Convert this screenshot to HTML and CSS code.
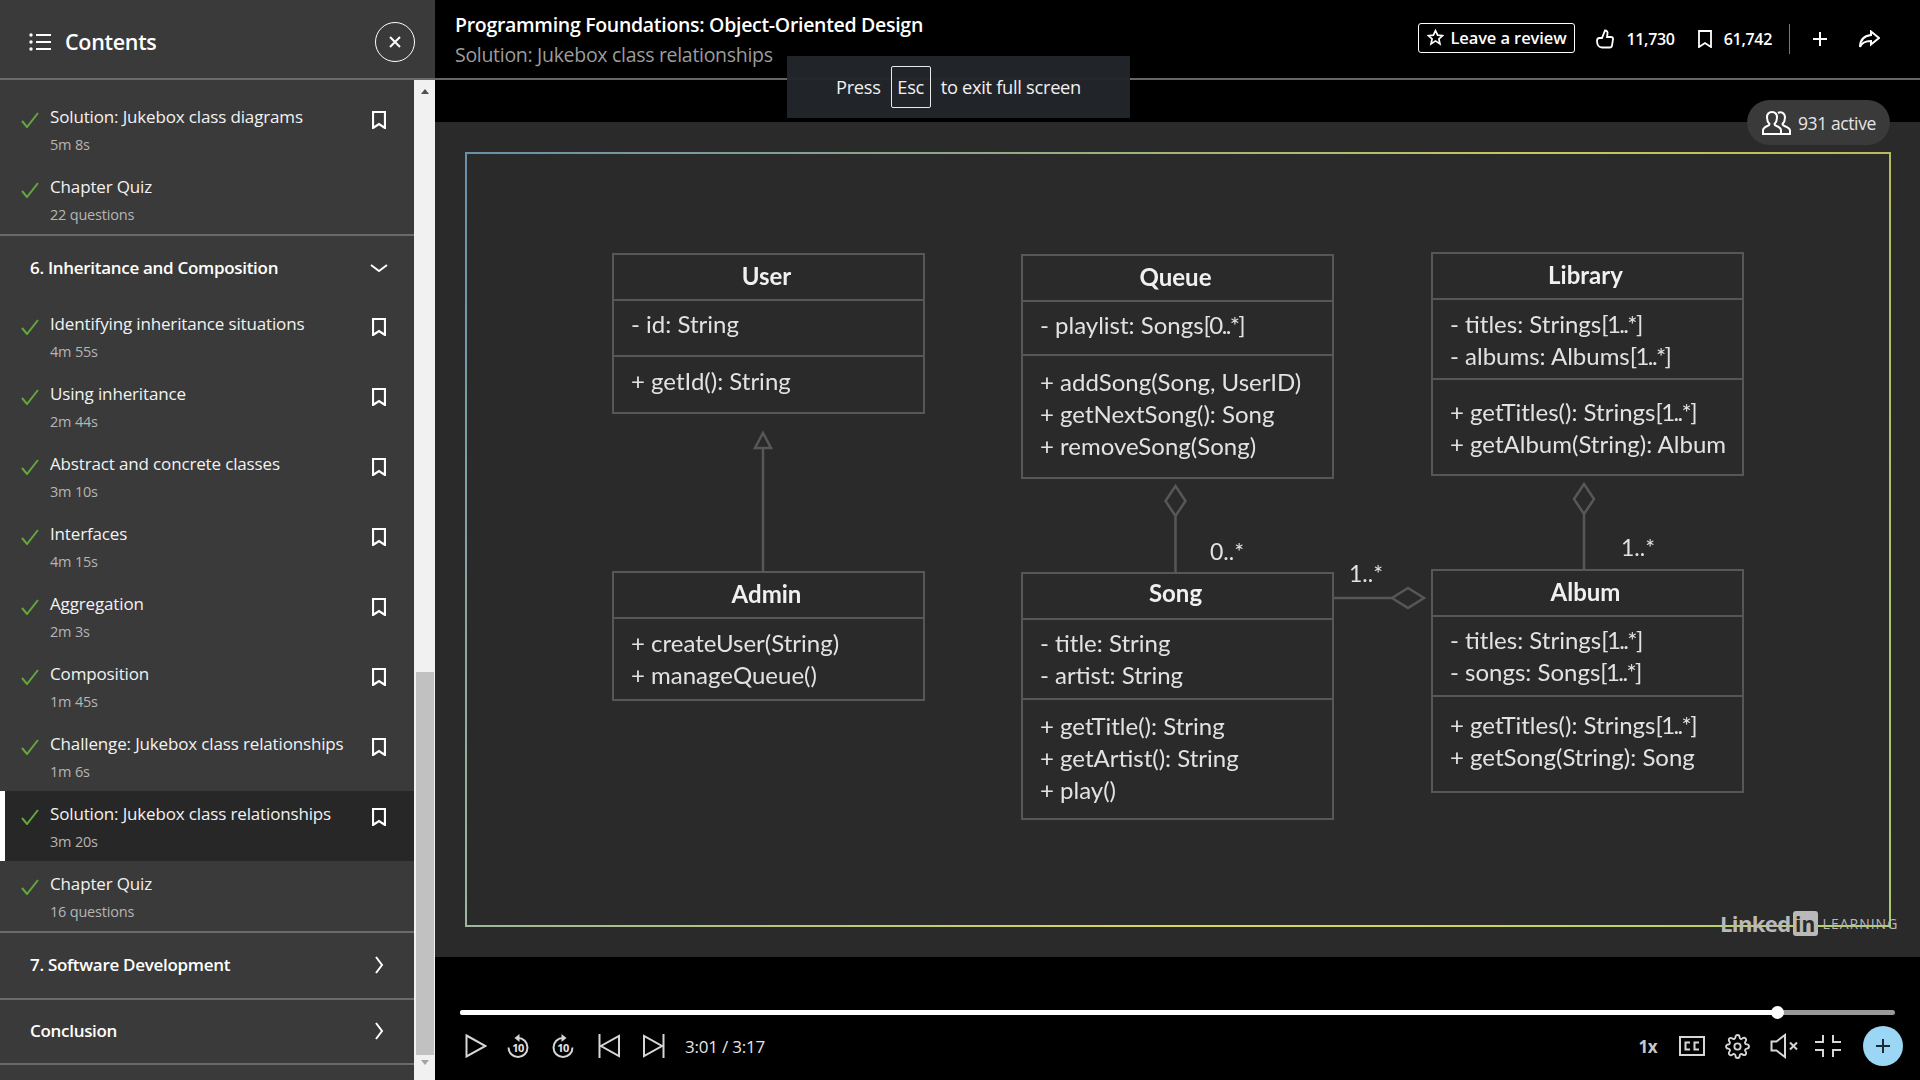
FILE: index.html
```html
<!DOCTYPE html>
<html lang="en">
<head>
    <meta charset="UTF-8">
    <title>Programming Foundations: Object-Oriented Design</title>
    <link rel="stylesheet" href="styles.css">
</head>
<body>
    <aside class="sidebar">
        <div class="side-head">
            <svg class="list-icon" width="24" height="20" viewBox="0 0 24 20"><circle cx="3" cy="3" r="1.7"/><circle cx="3" cy="10" r="1.7"/><circle cx="3" cy="17" r="1.7"/><path d="M8 3h15M8 10h15M8 17h15"/></svg>
            <h2>Contents</h2>
            <button class="close-btn"><svg width="14" height="14" viewBox="0 0 14 14"><path d="M2 2l10 10M12 2L2 12"/></svg></button>
        </div>
        <div class="side-body">
            <div class="toc">
                <div class="row">
                    <svg class="check" width="18" height="16" viewBox="0 0 18 16"><path d="M1 9l5 6L17 1"/></svg>
                    <div class="row-text"><div class="row-title">Solution: Jukebox class diagrams</div><div class="row-sub">5m 8s</div></div>
                    <svg class="mark" width="14" height="18" viewBox="0 0 14 18"><path d="M1 1h12v16l-6-4-6 4z"/></svg>
                </div>
                <div class="row">
                    <svg class="check" width="18" height="16" viewBox="0 0 18 16"><path d="M1 9l5 6L17 1"/></svg>
                    <div class="row-text"><div class="row-title">Chapter Quiz</div><div class="row-sub">22 questions</div></div>
                </div>
                <div class="section">
                    <span>6. Inheritance and Composition</span>
                    <svg class="chev" width="18" height="10" viewBox="0 0 18 10"><path d="M1 2l8 6 8-6"/></svg>
                </div>
                <div class="row">
                    <svg class="check" width="18" height="16" viewBox="0 0 18 16"><path d="M1 9l5 6L17 1"/></svg>
                    <div class="row-text"><div class="row-title">Identifying inheritance situations</div><div class="row-sub">4m 55s</div></div>
                    <svg class="mark" width="14" height="18" viewBox="0 0 14 18"><path d="M1 1h12v16l-6-4-6 4z"/></svg>
                </div>
                <div class="row">
                    <svg class="check" width="18" height="16" viewBox="0 0 18 16"><path d="M1 9l5 6L17 1"/></svg>
                    <div class="row-text"><div class="row-title">Using inheritance</div><div class="row-sub">2m 44s</div></div>
                    <svg class="mark" width="14" height="18" viewBox="0 0 14 18"><path d="M1 1h12v16l-6-4-6 4z"/></svg>
                </div>
                <div class="row">
                    <svg class="check" width="18" height="16" viewBox="0 0 18 16"><path d="M1 9l5 6L17 1"/></svg>
                    <div class="row-text"><div class="row-title">Abstract and concrete classes</div><div class="row-sub">3m 10s</div></div>
                    <svg class="mark" width="14" height="18" viewBox="0 0 14 18"><path d="M1 1h12v16l-6-4-6 4z"/></svg>
                </div>
                <div class="row">
                    <svg class="check" width="18" height="16" viewBox="0 0 18 16"><path d="M1 9l5 6L17 1"/></svg>
                    <div class="row-text"><div class="row-title">Interfaces</div><div class="row-sub">4m 15s</div></div>
                    <svg class="mark" width="14" height="18" viewBox="0 0 14 18"><path d="M1 1h12v16l-6-4-6 4z"/></svg>
                </div>
                <div class="row">
                    <svg class="check" width="18" height="16" viewBox="0 0 18 16"><path d="M1 9l5 6L17 1"/></svg>
                    <div class="row-text"><div class="row-title">Aggregation</div><div class="row-sub">2m 3s</div></div>
                    <svg class="mark" width="14" height="18" viewBox="0 0 14 18"><path d="M1 1h12v16l-6-4-6 4z"/></svg>
                </div>
                <div class="row">
                    <svg class="check" width="18" height="16" viewBox="0 0 18 16"><path d="M1 9l5 6L17 1"/></svg>
                    <div class="row-text"><div class="row-title">Composition</div><div class="row-sub">1m 45s</div></div>
                    <svg class="mark" width="14" height="18" viewBox="0 0 14 18"><path d="M1 1h12v16l-6-4-6 4z"/></svg>
                </div>
                <div class="row">
                    <svg class="check" width="18" height="16" viewBox="0 0 18 16"><path d="M1 9l5 6L17 1"/></svg>
                    <div class="row-text"><div class="row-title">Challenge: Jukebox class relationships</div><div class="row-sub">1m 6s</div></div>
                    <svg class="mark" width="14" height="18" viewBox="0 0 14 18"><path d="M1 1h12v16l-6-4-6 4z"/></svg>
                </div>
                <div class="row row-active">
                    <svg class="check" width="18" height="16" viewBox="0 0 18 16"><path d="M1 9l5 6L17 1"/></svg>
                    <div class="row-text"><div class="row-title">Solution: Jukebox class relationships</div><div class="row-sub">3m 20s</div></div>
                    <svg class="mark" width="14" height="18" viewBox="0 0 14 18"><path d="M1 1h12v16l-6-4-6 4z"/></svg>
                </div>
                <div class="row">
                    <svg class="check" width="18" height="16" viewBox="0 0 18 16"><path d="M1 9l5 6L17 1"/></svg>
                    <div class="row-text"><div class="row-title">Chapter Quiz</div><div class="row-sub">16 questions</div></div>
                </div>
                <div class="section">
                    <span>7. Software Development</span>
                    <svg class="chev chev-right" width="10" height="18" viewBox="0 0 10 18"><path d="M2 1l6 8-6 8"/></svg>
                </div>
                <div class="section">
                    <span>Conclusion</span>
                    <svg class="chev chev-right" width="10" height="18" viewBox="0 0 10 18"><path d="M2 1l6 8-6 8"/></svg>
                </div>
            </div>
            <div class="scrollbar">
                <div class="arrow-up"></div>
                <div class="thumb"></div>
                <div class="arrow-down"></div>
            </div>
        </div>
    </aside>

    <main class="player">
        <header class="top">
            <div class="titles">
                <div class="course">Programming Foundations: Object-Oriented Design</div>
                <div class="lesson">Solution: Jukebox class relationships</div>
            </div>
            <div class="actions">
                <button class="review">
                    <svg width="17" height="17" viewBox="0 0 16 16"><path d="M8 1.500l2 4.300 4.600.5-3.400 3.100 1 4.600L8 11.200l-4.200 2.800 1-4.600L1.400 6.300 6 5.800z"/></svg>
                    Leave a review
                </button>
                <span class="stat stat-likes">
                    <svg width="18" height="20" viewBox="0 0 18 20"><path d="M1 12c0-2 1-3 2.500-3H6l3-7.500c1.800 0 2.800 1.200 2.500 3L11 8h4c1.500 0 2.200 1 2 2.200l-1 6.300c-.2 1.200-1 2-2.200 2H6c-3 0-5-2.500-5-6.500z"/></svg>
                    11,730
                </span>
                <span class="stat stat-saves">
                    <svg width="14" height="18" viewBox="0 0 14 18"><path d="M1 1h12v16l-6-4-6 4z"/></svg>
                    61,742
                </span>
                <span class="divider"></span>
                <svg class="act-plus" width="20" height="20" viewBox="0 0 20 20"><path d="M10 3v14M3 10h14"/></svg>
                <svg class="act-share" width="22" height="18" viewBox="0 0 22 18"><path d="M13 1.500l8 6.500-8 6.500V11c-5 0-9 1-11 6 0-6 3-11 11-12z"/></svg>
            </div>
        </header>

        <div class="active-row">
            <div class="active-pill">
                <svg width="30" height="24" viewBox="0 0 30 24"><path d="M1 23v-3.500c0-2.500 2-3.500 4.500-4.500 1.500-.5 2-1 2-2-1.500-1.500-2.500-3.500-2.500-6.500C5 3 7 1 10 1s5 2 5 5.500c0 3-1 5-2.500 6.500 0 1 .5 1.500 2 2 2.500 1 4.500 2 4.500 4.500V23z"/><path d="M16 2c3-1.500 7-.5 7 4.500 0 3-1 5-2.500 6.500 0 1 .5 1.500 2 2 2.500 1 5.500 2 5.500 4.500V23h-8"/></svg>
                <span>931 active</span>
            </div>
        </div>

        <section class="video">
            <div class="slide">
                <svg class="links" width="1426" height="775" viewBox="0 0 1426 775">
                    <path d="M298 419V295M290 295l8-15 8 15z"/>
                    <path d="M710.500 420V363M710.500 333l10 15-10 15-10-15z"/>
                    <path d="M1119 417V361M1119 331l10 15-10 15-10-15z"/>
                    <path d="M869 445h58M927 445l16-10 16 10-16 10z"/>
                </svg>

                <div class="uml uml-user">
                    <div class="uml-name">User</div>
                    <div class="uml-part part-56">- id: String</div>
                    <div class="uml-part pad-8">+ getId(): String</div>
                </div>
                <div class="uml uml-queue">
                    <div class="uml-name">Queue</div>
                    <div class="uml-part part-54">- playlist: Songs<span class="range">[0..*]</span></div>
                    <div class="uml-part pad-10">+ addSong(Song, UserID)<br>+ getNextSong(): Song<br>+ removeSong(Song)</div>
                </div>
                <div class="uml uml-library">
                    <div class="uml-name">Library</div>
                    <div class="uml-part part-80 pad-8">- titles: Strings<span class="range">[1..*]</span><br>- albums: Albums<span class="range">[1..*]</span></div>
                    <div class="uml-part pad-16">+ getTitles(): Strings<span class="range">[1..*]</span><br>+ getAlbum(String): Album</div>
                </div>
                <div class="uml uml-admin">
                    <div class="uml-name">Admin</div>
                    <div class="uml-part pad-8">+ createUser(String)<br>+ manageQueue()</div>
                </div>
                <div class="uml uml-song">
                    <div class="uml-name uml-name-high">Song</div>
                    <div class="uml-part part-80">- title: String<br>- artist: String</div>
                    <div class="uml-part pad-10">+ getTitle(): String<br>+ getArtist(): String<br>+ play()</div>
                </div>
                <div class="uml uml-album">
                    <div class="uml-name">Album</div>
                    <div class="uml-part part-80">- titles: Strings<span class="range">[1..*]</span><br>- songs: Songs<span class="range">[1..*]</span></div>
                    <div class="uml-part pad-12">+ getTitles(): Strings<span class="range">[1..*]</span><br>+ getSong(String): Song</div>
                </div>

                <span class="mult mult-song">0..*</span>
                <span class="mult mult-link">1..*</span>
                <span class="mult mult-album">1..*</span>
            </div>
            <div class="watermark">
                <span class="wm-linked">Linked</span><span class="wm-in">in</span><span class="wm-learning">LEARNING</span>
            </div>
        </section>

        <footer class="controls">
            <div class="progress"><div class="progress-done"></div><div class="progress-knob"></div></div>
            <div class="control-row">
                <div class="control-group">
                    <svg class="ctl" width="22" height="24" viewBox="0 0 22 24"><path d="M1.500 1.500L20.500 12 1.500 22.500z"/></svg>
                    <svg class="ctl ctl-back" width="24" height="26" viewBox="0 0 24 26"><path d="M12 5a9.500 9.500 0 1 1-9.500 9.500"/><path class="solid" d="M13.500 1L8.500 5l5 4z"/><text x="12" y="18.500" text-anchor="middle">10</text></svg>
                    <svg class="ctl" width="24" height="26" viewBox="0 0 24 26"><path d="M12 5a9.500 9.500 0 1 0 9.500 9.500"/><path class="solid" d="M10.500 1l5 4-5 4z"/><text x="12" y="18.500" text-anchor="middle">10</text></svg>
                    <svg class="ctl ctl-prev" width="22" height="26" viewBox="0 0 22 26"><path d="M1.500 1v24M21 3v20L3 13z"/></svg>
                    <svg class="ctl ctl-next" width="22" height="26" viewBox="0 0 22 26"><path d="M20.500 1v24M1 3v20l18-10z"/></svg>
                    <span class="time">3:01 / 3:17</span>
                </div>
                <div class="control-group">
                    <span class="speed">1x</span>
                    <svg class="ctl ctl-cc" width="26" height="20" viewBox="0 0 26 20"><path d="M1 1h24v18H1z"/><path d="M11 6.500H6.500v7H11M20 6.500h-4.500v7H20"/></svg>
                    <svg class="ctl ctl-gear" width="25" height="25" viewBox="0 0 24 24"><circle cx="12" cy="12" r="3"/><path d="M19.400 15a1.650 1.650 0 0 0 .33 1.820l.06.06a2 2 0 0 1 0 2.830 2 2 0 0 1-2.830 0l-.06-.06a1.650 1.650 0 0 0-1.820-.33 1.650 1.650 0 0 0-1 1.510V21a2 2 0 0 1-2 2 2 2 0 0 1-2-2v-.09A1.650 1.650 0 0 0 9 19.400a1.650 1.650 0 0 0-1.820.33l-.06.06a2 2 0 0 1-2.830 0 2 2 0 0 1 0-2.830l.06-.06a1.650 1.650 0 0 0 .33-1.820 1.650 1.650 0 0 0-1.510-1H3a2 2 0 0 1-2-2 2 2 0 0 1 2-2h.09A1.650 1.650 0 0 0 4.600 9a1.650 1.650 0 0 0-.33-1.820l-.06-.06a2 2 0 0 1 0-2.830 2 2 0 0 1 2.830 0l.06.06a1.650 1.650 0 0 0 1.820.33H9a1.650 1.650 0 0 0 1-1.510V3a2 2 0 0 1 2-2 2 2 0 0 1 2 2v.09a1.650 1.650 0 0 0 1 1.510 1.650 1.650 0 0 0 1.820-.33l.06-.06a2 2 0 0 1 2.830 0 2 2 0 0 1 0 2.830l-.06.06a1.650 1.650 0 0 0-.33 1.820V9a1.650 1.650 0 0 0 1.510 1H21a2 2 0 0 1 2 2 2 2 0 0 1-2 2h-.09a1.650 1.650 0 0 0-1.510 1z"/></svg>
                    <svg class="ctl ctl-mute" width="28" height="26" viewBox="0 0 28 26"><path d="M1.500 8.500v9h5L15 24V2L6.500 8.500zM20 9.500l7 7M27 9.500l-7 7"/></svg>
                    <svg class="ctl ctl-exit" width="28" height="24" viewBox="0 0 28 24"><path d="M9 1v7H1M19 1v7h8M9 23v-7H1M19 23v-7h8"/></svg>
                    <button class="fab"><svg width="18" height="18" viewBox="0 0 18 18"><path d="M9 2v14M2 9h14"/></svg></button>
                </div>
            </div>
        </footer>

        <div class="esc-toast">
            <span>Press</span><kbd>Esc</kbd><span>to exit full screen</span>
        </div>
    </main>
</body>
</html>
```
FILE: styles.css
```css
* {
    box-sizing: border-box;
}
html, body {
    margin: 0;
    height: 100%;
}
body {
    display: flex;
    width: 1920px;
    height: 1080px;
    overflow: hidden;
    background: #000;
    color: #fff;
    font-family: "Open Sans", "Noto Sans", sans-serif;
}
button {
    font-family: inherit;
    color: inherit;
    background: none;
    cursor: pointer;
}
svg {
    display: block;
    flex: none;
    fill: none;
    stroke: #fff;
}

/* sidebar */
.sidebar {
    width: 435px;
    flex: none;
    display: flex;
    flex-direction: column;
    background: #3a3a3a;
}
.side-head {
    height: 80px;
    flex: none;
    display: flex;
    align-items: center;
    padding: 5px 20px 0 28px;
    border-bottom: 2px solid #6a6a6a;
}
.list-icon {
    stroke-width: 2;
}
.list-icon circle {
    fill: #fff;
    stroke: none;
}
.side-head h2 {
    margin: 0 0 0 13px;
    font-size: 21.5px;
    font-weight: 600;
    letter-spacing: -0.3px;
}
.close-btn {
    margin-left: auto;
    width: 40px;
    height: 40px;
    border: 1.5px solid #fff;
    border-radius: 50%;
    display: flex;
    align-items: center;
    justify-content: center;
    padding: 0;
}
.close-btn svg {
    stroke-width: 2;
}
.side-body {
    flex: 1;
    display: flex;
    min-height: 0;
}
.toc {
    flex: 1;
    padding-top: 14px;
}
.row {
    height: 70px;
    display: flex;
    padding: 11px 28px 0 21px;
}
.row-active {
    background: #272727;
    box-shadow: inset 5px 0 0 #fff;
}
.check {
    stroke: #62a83e;
    stroke-width: 2;
    margin-top: 7px;
}
.row-text {
    margin-left: 11px;
    flex: 1;
}
.row-title {
    font-size: 17px;
    line-height: 24px;
    letter-spacing: -0.15px;
    color: #f2f2f2;
}
.row-sub {
    margin-top: 7px;
    font-size: 14.5px;
    line-height: 18px;
    letter-spacing: -0.2px;
    color: #b5b5b5;
}
.mark {
    stroke-width: 2.200;
    margin-top: 5.500px;
}
.section {
    height: 67px;
    display: flex;
    align-items: center;
    justify-content: space-between;
    padding: 0 26px 2px 30px;
    border-top: 2px solid #6a6a6a;
    font-size: 17px;
    font-weight: 600;
    letter-spacing: -0.3px;
}
.section:last-child {
    border-bottom: 2px solid #6a6a6a;
}
.chev {
    stroke-width: 2;
}
.chev-right {
    margin-right: 4px;
}
.scrollbar {
    width: 21px;
    flex: none;
    display: flex;
    flex-direction: column;
    align-items: center;
    background: #f1f1f1;
}
.arrow-up {
    margin-top: 9px;
    border: 4.5px solid transparent;
    border-top: 0;
    border-bottom: 5px solid #505050;
}
.thumb {
    margin-top: 578px;
    width: 18px;
    height: 383px;
    background: #c1c1c1;
}
.arrow-down {
    margin-top: 5px;
    border: 4.5px solid transparent;
    border-bottom: 0;
    border-top: 5px solid #a3a3a3;
}

/* player */
.player {
    flex: 1;
    display: flex;
    flex-direction: column;
    position: relative;
    min-width: 0;
}
.top {
    height: 80px;
    flex: none;
    display: flex;
    justify-content: space-between;
    padding: 0 40px 0 20px;
    border-bottom: 2px solid #666;
}
.titles {
    padding-top: 11px;
}
.course {
    font-size: 19.5px;
    line-height: 28px;
    font-weight: 600;
    letter-spacing: -0.3px;
}
.lesson {
    margin-top: 2px;
    font-size: 19.5px;
    line-height: 28px;
    letter-spacing: -0.3px;
    color: #9c9c9c;
}
.actions {
    display: flex;
    align-items: center;
    height: 78px;
}
.review {
    display: flex;
    align-items: center;
    gap: 6px;
    width: 157px;
    height: 30px;
    margin-top: -2px;
    padding: 0 0 1px 8px;
    border: 1.5px solid #fff;
    border-radius: 3px;
    font-size: 16.5px;
    font-weight: 600;
    letter-spacing: -0.1px;
    white-space: nowrap;
}
.review svg {
    stroke-width: 1.600;
}
.stat {
    display: flex;
    align-items: center;
    gap: 12px;
    font-size: 16px;
    font-weight: 600;
    letter-spacing: -0.3px;
}
.stat svg {
    stroke-width: 1.800;
}
.stat-likes {
    margin-left: 21px;
}
.stat-saves {
    margin-left: 23px;
}
.divider {
    width: 1px;
    height: 30px;
    margin-left: 17px;
    background: #777;
}
.act-plus {
    margin-left: 20px;
    stroke-width: 2;
}
.act-share {
    margin-left: 28px;
    stroke-width: 2;
}
.active-row {
    height: 42px;
    flex: none;
    position: relative;
    z-index: 2;
}
.active-pill {
    position: absolute;
    top: 20px;
    right: 30px;
    width: 143px;
    height: 45px;
    display: flex;
    align-items: center;
    gap: 6px;
    padding-left: 15px;
    border-radius: 23px;
    background: #3a3a3a;
    font-size: 17.5px;
    letter-spacing: -0.4px;
    color: #e6e6e6;
}
.active-pill svg {
    stroke-width: 2;
}

/* video with the slide */
.video {
    height: 835px;
    flex: none;
    position: relative;
    padding: 30px 29px 0 30px;
    background: #2a2a2a;
}
.slide {
    position: relative;
    height: 775px;
    background:
        linear-gradient(90deg, #6a90a8, #8fa88a 35%, #c6c75e 75%, #b6bc5e) top / 100% 2px no-repeat,
        linear-gradient(90deg, #9db79b, #d9d75c 50%, #b4cf6a) bottom / 100% 2px no-repeat,
        linear-gradient(180deg, #6a90a8, #9db79b) left / 2px 100% no-repeat,
        linear-gradient(180deg, #b6bc5e, #a8cc6c) right / 2px 100% no-repeat;
    font-family: Lato, "Open Sans", sans-serif;
}
.links {
    position: absolute;
    left: 0;
    top: 1px;
    stroke: #575757;
    stroke-width: 2.500;
    filter: blur(0.3px);
}
.uml {
    position: absolute;
    width: 313px;
    display: flex;
    flex-direction: column;
    border: 2px solid #575757;
    color: #e2e2e2;
    filter: blur(0.3px);
}
.uml-user { left: 147px; top: 101px; height: 161px; }
.uml-queue { left: 556px; top: 102px; height: 225px; }
.uml-library { left: 966px; top: 100px; height: 224px; }
.uml-admin { left: 147px; top: 419px; height: 130px; }
.uml-song { left: 556px; top: 420px; height: 248px; }
.uml-album { left: 966px; top: 417px; height: 224px; }
.uml-name {
    height: 44px;
    flex: none;
    display: flex;
    align-items: center;
    justify-content: center;
    padding: 0 4px 3px 0;
    font-size: 24px;
    font-weight: 700;
    color: #f0f0f0;
}
.uml-name-high {
    padding-bottom: 7px;
}
.uml-part {
    padding: 7px 0 0 17px;
    border-top: 2px solid #575757;
    font-size: 24px;
    line-height: 32px;
    white-space: nowrap;
}
.range {
    letter-spacing: -1.600px;
}
.part-54 { height: 54px; flex: none; }
.part-56 { height: 56px; flex: none; }
.part-80 { height: 80px; flex: none; }
.pad-8 { padding-top: 8px; }
.pad-10 { padding-top: 10px; }
.pad-12 { padding-top: 12px; }
.pad-16 { padding-top: 16px; }
.mult {
    position: absolute;
    font-size: 23px;
    line-height: 28px;
    color: #e2e2e2;
    filter: blur(0.3px);
}
.mult-song { left: 745px; top: 385px; }
.mult-link { left: 884px; top: 407px; }
.mult-album { left: 1156px; top: 381px; }
.watermark {
    position: absolute;
    left: 1285px;
    top: 788px;
    display: flex;
    align-items: center;
    font-family: "Open Sans", sans-serif;
    color: #b9b9b9;
}
.wm-linked {
    font-size: 22px;
    line-height: 26px;
    font-weight: 700;
    letter-spacing: -0.6px;
}
.wm-in {
    margin-left: 2px;
    width: 25px;
    height: 25px;
    border-radius: 3px;
    background: #b9b9b9;
    color: #2a2a2a;
    font-size: 21px;
    line-height: 26px;
    font-weight: 700;
    text-align: center;
}
.wm-learning {
    margin-left: 5px;
    font-size: 14px;
    letter-spacing: 1px;
}

/* controls */
.controls {
    flex: 1;
    padding: 53px 25px 0 25px;
}
.progress {
    position: relative;
    height: 5px;
    border-radius: 3px;
    background: #999;
}
.progress-done {
    width: 1318px;
    height: 5px;
    border-radius: 3px;
    background: #fff;
}
.progress-knob {
    position: absolute;
    left: 1311px;
    top: -4px;
    width: 13px;
    height: 13px;
    border-radius: 50%;
    background: #fff;
}
.control-row {
    display: flex;
    align-items: center;
    justify-content: space-between;
    margin: 11px -8px 0 5px;
    height: 40px;
}
.control-group {
    display: flex;
    align-items: center;
    gap: 21px;
}
.ctl {
    stroke: #d6d6d6;
    stroke-width: 2;
}
.ctl text {
    fill: #e6e6e6;
    stroke: none;
    font-size: 11px;
    font-weight: 700;
    letter-spacing: -0.5px;
}
.ctl .solid {
    fill: #d6d6d6;
    stroke: none;
}
.ctl-back { margin-left: -2px; }
.ctl-prev { margin-left: 2px; }
.ctl-next { margin-left: 2px; }
.ctl-cc { margin-left: 1px; }
.ctl-mute { margin-left: -1px; }
.ctl-exit { margin-left: -5px; }
.ctl-gear {
    margin-left: -1px;
    stroke-width: 1.800;
}
.time {
    margin-left: -1px;
    font-size: 17px;
    letter-spacing: -0.2px;
    color: #e6e6e6;
}
.speed {
    font-size: 17px;
    font-weight: 700;
    letter-spacing: -0.5px;
    color: #c8c8c8;
}
.fab {
    width: 40px;
    height: 40px;
    padding: 0;
    border: 0;
    border-radius: 50%;
    background: #9bd7f5;
    display: flex;
    align-items: center;
    justify-content: center;
}
.fab svg {
    stroke: #1c2a33;
    stroke-width: 2;
}

/* browser's fullscreen message */
.esc-toast {
    position: absolute;
    left: 352px;
    top: 56px;
    width: 343px;
    height: 62px;
    z-index: 3;
    display: flex;
    align-items: center;
    justify-content: center;
    gap: 10px;
    padding-bottom: 1px;
    background: rgba(34, 38, 43, 0.97);
    font-size: 18.3px;
    letter-spacing: -0.3px;
    color: #f0f0f0;
}
.esc-toast kbd {
    width: 40px;
    height: 42px;
    display: flex;
    align-items: center;
    justify-content: center;
    border: 1px solid #e8e8e8;
    border-radius: 2px;
    font-family: inherit;
}
```
